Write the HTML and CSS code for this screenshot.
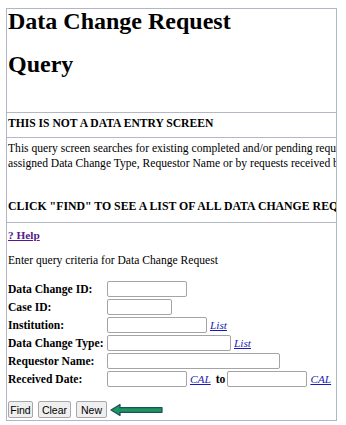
FILE: index.html
```html
<!DOCTYPE html>
<html lang="en">
<head>
    <meta charset="UTF-8">
    <title>Data Change Request Query</title>
    <link rel="stylesheet" href="styles.css">
</head>
<body>
    <div class="frame">
        <h1 class="page-title">Data Change Request</h1>
        <h1 class="page-title second">Query</h1>
        <hr class="rule">
        <h4 class="notice">THIS IS NOT A DATA ENTRY SCREEN</h4>
        <hr class="rule">
        <p class="intro">This query screen searches for existing completed and/or pending requests by Data Change ID, Case ID, Institution,<br>assigned Data Change Type, Requestor Name or by requests received between specified dates.</p>
        <h4 class="notice find-note">CLICK "FIND" TO SEE A LIST OF ALL DATA CHANGE REQUESTS</h4>
        <hr class="rule">
        <a class="help" href="#">? Help</a>
        <p class="criteria">Enter query criteria for Data Change Request</p>

        <table class="query-form">
            <tr>
                <th>Data Change ID:</th>
                <td><div class="field"><input type="text" class="w80"></div></td>
            </tr>
            <tr>
                <th>Case ID:</th>
                <td><div class="field"><input type="text" class="w65"></div></td>
            </tr>
            <tr>
                <th>Institution:</th>
                <td><div class="field"><input type="text" class="w100"><a class="lookup" href="#">List</a></div></td>
            </tr>
            <tr>
                <th>Data Change Type:</th>
                <td><div class="field"><input type="text" class="w124"><a class="lookup" href="#">List</a></div></td>
            </tr>
            <tr>
                <th>Requestor Name:</th>
                <td><div class="field"><input type="text" class="w173"></div></td>
            </tr>
            <tr>
                <th>Received Date:</th>
                <td><div class="field"><input type="text" class="w80"><a class="lookup" href="#">CAL</a><b class="to">to</b><input type="text" class="w80"><a class="lookup" href="#">CAL</a></div></td>
            </tr>
        </table>

        <div class="actions">
            <button type="button" class="btn-find">Find</button>
            <button type="button" class="btn-clear">Clear</button>
            <button type="button" class="btn-new">New</button>
            <svg class="arrow" width="54" height="14" viewBox="0 0 54 14">
                <path d="M1 7 L10 1.5 L10 4.7 L52 4.7 L52 9.3 L10 9.3 L10 12.5 Z" fill="#1f9560" stroke="#1d4f5c" stroke-width="1.2" stroke-linejoin="round"/>
            </svg>
        </div>
    </div>
</body>
</html>
```

FILE: styles.css
```css
body {
    margin: 8px 0 0 6px;
    font-family: "Liberation Serif", "Times New Roman", serif;
    font-size: 11.3px;
    color: #000;
    background: #fff;
}

.frame {
    width: 328px;
    height: 411px;
    border: 1px solid #aeb6c8;
    padding: 0 0 0 1px;
    overflow: hidden;
    white-space: nowrap;
}

.page-title {
    font-size: 24px;
    font-weight: bold;
    margin: 0 0 19px 0;
    line-height: 24px;
}

.page-title.second {
    margin-bottom: 36px;
}

.rule {
    margin: 0 0 0 -1px;
    width: 400px;
    border: none;
    border-top: 1px solid #b4b8c4;
    height: 0;
}

.notice {
    font-size: 11.6px;
    margin: 0;
    padding: 3px 0 6px 0;
    line-height: 15px;
}

.intro {
    font-size: 11.6px;
    margin: 3px 0 0 0;
    line-height: 15px;
}

.find-note {
    font-size: 11.8px;
    padding-top: 28px;
    padding-bottom: 8px;
}

.help {
    display: block;
    margin-top: 5px;
    font-weight: bold;
    color: #551a8b;
    line-height: 15px;
}

.criteria {
    font-size: 11.6px;
    margin: 10px 0 12px 0;
    line-height: 15px;
}

.query-form {
    border-collapse: collapse;
}

.query-form th {
    text-align: left;
    width: 97px;
    padding: 0 2px 0 0;
    height: 18px;
    font-size: 11.6px;
    font-weight: bold;
}

.query-form td {
    padding: 0;
    height: 18px;
}

.field {
    display: flex;
    align-items: center;
}

.field input {
    height: 16px;
    box-sizing: border-box;
    border: 1px solid #a3a3a8;
    border-radius: 2px;
    padding: 0 2px;
    margin: 0;
}

.w80 { width: 80px; }
.w65 { width: 65px; }
.w100 { width: 100px; }
.w124 { width: 124px; }
.w173 { width: 173px; }

.lookup {
    color: #1a1ab8;
    font-style: italic;
    margin-left: 3px;
}

.to {
    margin: 0 2px 0 5px;
    font-size: 11.6px;
}

.actions {
    display: flex;
    align-items: center;
    gap: 5px;
    margin-top: 13px;
}

.actions button {
    font-family: "Liberation Sans", Arial, sans-serif;
    font-size: 10.5px;
    height: 17px;
    padding: 0;
    background: #efefef;
    border: 1px solid #a8a8a8;
    border-radius: 2px;
    color: #000;
}

.btn-find { width: 25px; }
.btn-clear { width: 33px; }
.btn-new { width: 31px; }

.arrow {
    margin-left: -2px;
}
```
